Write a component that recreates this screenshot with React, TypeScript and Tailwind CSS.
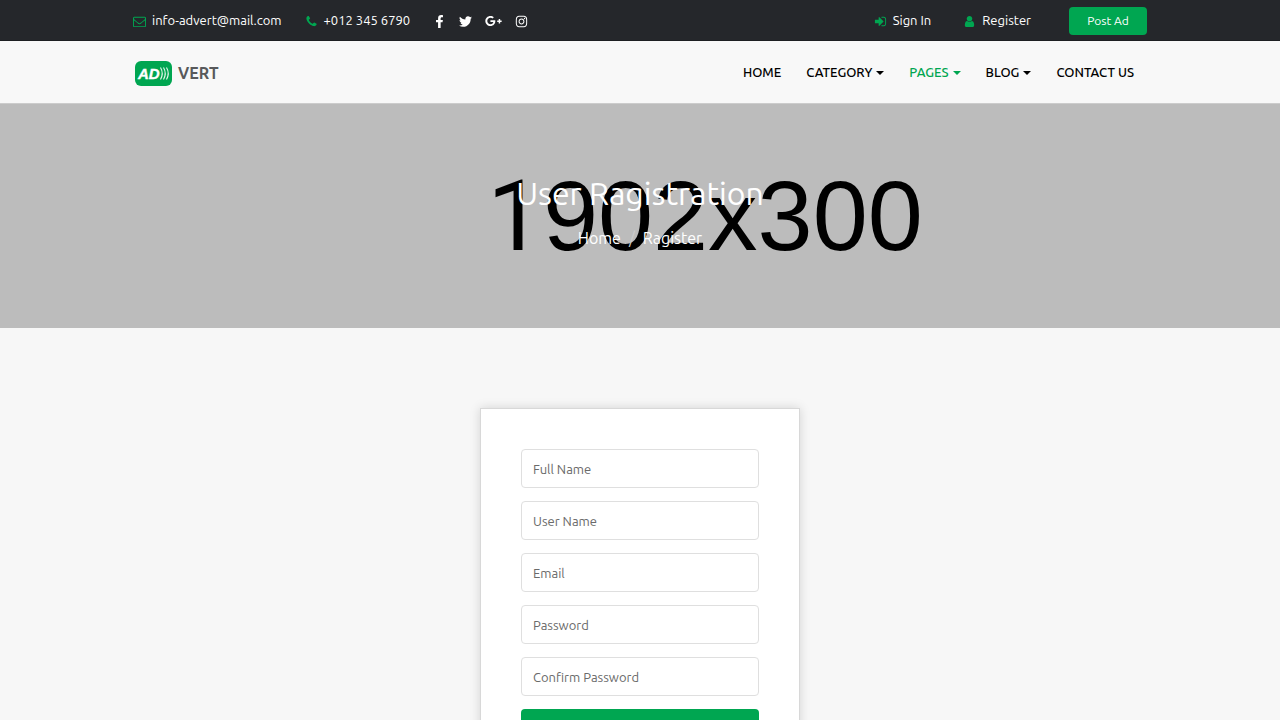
import type { ReactNode } from "react";
import { FaFacebookF, FaGooglePlusG, FaInstagram, FaTwitter } from "react-icons/fa";

const icons = {
	envelope:
		"M1664 1504v-768q-32 36-69 66-268 206-426 338-51 43-83 67t-86.5 48.5-102.5 24.5h-2q-48 0-102.5-24.5t-86.5-48.5-83-67q-158-132-426-338-37-30-69-66v768q0 13 9.5 22.5t22.5 9.5h1472q13 0 22.5-9.5t9.5-22.5zm0-1051v-24.5l-.5-13-3-12.5-5.5-9-9-7.5-14-2.5h-1472q-13 0-22.5 9.5t-9.5 22.5q0 168 147 284 193 152 401 317 6 5 35 29.5t46 37.5 44.5 31.5 50.5 27.5 43 9h2q20 0 43-9t50.5-27.5 44.5-31.5 46-37.5 35-29.5q208-165 401-317 54-43 100.5-115.5t46.5-131.5zm128-37v1088q0 66-47 113t-113 47h-1472q-66 0-113-47t-47-113v-1088q0-66 47-113t113-47h1472q66 0 113 47t47 113z",
	phone:
		"M1600 1240q0 27-10 70.5t-21 68.5q-21 50-122 106-94 51-186 51-27 0-53-3.5t-57.5-12.5-47-14.5-55.5-20.5-49-18q-98-35-175-83-127-79-264-216t-216-264q-48-77-83-175-3-9-18-49t-20.5-55.5-14.5-47-12.5-57.5-3.5-53q0-92 51-186 56-101 106-122 25-11 68.5-21t70.5-10q14 0 21 3 18 6 53 76 11 19 30 54t35 63.5 31 53.5q3 4 17.5 25t21.5 35.5 7 28.5q0 20-28.5 50t-62 55-62 53-28.5 46q0 9 5 22.5t8.5 20.5 14 24 11.5 19q76 137 174 235t235 174q2 1 19 11.5t24 14 20.5 8.5 22.5 5q18 0 46-28.5t53-62 55-62 50-28.5q14 0 28.5 7t35.5 21.5 25 17.5q25 15 53.5 31t63.5 35 54 30q70 35 76 53 3 7 3 21z",
	signIn:
		"M1312 896q0 26-19 45l-544 544q-19 19-45 19t-45-19-19-45v-288h-448q-26 0-45-19t-19-45v-384q0-26 19-45t45-19h448v-288q0-26 19-45t45-19 45 19l544 544q19 19 19 45zm352-352v704q0 119-84.5 203.5t-203.5 84.5h-320q-13 0-22.5-9.5t-9.5-22.5q0-4-1-20t-.5-26.5 3-23.5 10-19.5 20.5-6.5h320q66 0 113-47t47-113v-704q0-66-47-113t-113-47h-312l-11.5-1-11.5-3-8-5.5-7-9-2-13.5q0-4-1-20t-.5-26.5 3-23.5 10-19.5 20.5-6.5h320q119 0 203.5 84.5t84.5 203.5z",
	user: "M1536 1399q0 109-62.5 187t-150.5 78h-854q-88 0-150.5-78t-62.5-187q0-85 8.5-160.5t31.5-152 58.5-131 94-89 134.5-34.5q131 128 313 128t313-128q76 0 134.5 34.5t94 89 58.5 131 31.5 152 8.5 160.5zm-256-887q0 159-112.5 271.5t-271.5 112.5-271.5-112.5-112.5-271.5 112.5-271.5 271.5-112.5 271.5 112.5 112.5 271.5z"
};

const menu = [
	{ label: "HOME" },
	{ label: "CATEGORY", dropdown: true },
	{ label: "PAGES", dropdown: true, active: true },
	{ label: "BLOG", dropdown: true },
	{ label: "CONTACT US" }
];

const fields = [
	{ id: "full-name", label: "Full Name", type: "text" },
	{ id: "user-name", label: "User Name", type: "text" },
	{ id: "email", label: "Email", type: "email" },
	{ id: "password", label: "Password", type: "password" },
	{ id: "confirm-password", label: "Confirm Password", type: "password" }
];

function Icon({ name }: { name: keyof typeof icons }) {
	return (
		<svg viewBox="0 0 1792 1792" className="h-[13px] w-[13px] shrink-0 fill-[#00a651]" aria-hidden="true">
			<path d={icons[name]} />
		</svg>
	);
}

function Container({ className, children }: { className: string; children: ReactNode }) {
	return <div className={`mx-auto flex w-full max-w-[1014px] items-center ${className}`}>{children}</div>;
}

function TopBar() {
	return (
		<div className="border-b border-[#1d1f22] bg-[#25272b] text-[13px] text-white">
			<Container className="h-10 justify-between pt-[2px]">
				<div className="flex items-center gap-[23px]">
					<a href="#" className="flex items-center gap-[6px]">
						<Icon name="envelope" />
						info-advert@mail.com
					</a>
					<a href="#" className="flex items-center gap-[6px]">
						<Icon name="phone" />
						+012 345 6790
					</a>
					<div className="flex items-center gap-[13px]">
						<a href="#" aria-label="Facebook">
							<FaFacebookF />
						</a>
						<a href="#" aria-label="Twitter">
							<FaTwitter />
						</a>
						<a href="#" aria-label="Google Plus">
							<FaGooglePlusG className="h-4 w-[17px]" />
						</a>
						<a href="#" aria-label="Instagram">
							<FaInstagram />
						</a>
					</div>
				</div>
				<div className="flex items-center">
					<a href="#" className="mr-8 flex items-center gap-[6px]">
						<Icon name="signIn" />
						Sign In
					</a>
					<a href="#" className="mr-[38px] flex items-center gap-[6px]">
						<Icon name="user" />
						Register
					</a>
					<button className="h-7 w-[78px] cursor-pointer rounded bg-[#00a651] text-xs">Post Ad</button>
				</div>
			</Container>
		</div>
	);
}

function Logo() {
	return (
		<a href="#" className="ml-[2px] flex items-center gap-[6px]">
			<svg viewBox="0 0 37 25" className="h-[25px] w-[37px]" aria-hidden="true">
				<rect width="37" height="25" rx="6" fill="#00a651" />
				<text
					x="3"
					y="18"
					fill="#fff"
					stroke="#fff"
					strokeWidth="0.4"
					fontFamily="Liberation Sans, sans-serif"
					fontSize="15"
					fontWeight="700"
					fontStyle="italic"
				>
					AD
				</text>
				<path
					d="M25.5 6.5q3.5 6 0 12M28.5 6.5q3.5 6 0 12M31.5 6.5q3.5 6 0 12"
					fill="none"
					stroke="#e6f6ed"
					strokeWidth="1.1"
				/>
			</svg>
			<span className="text-base font-bold text-[#58595b]">VERT</span>
		</a>
	);
}

function Header() {
	return (
		<header className="border-b border-[#cccccc] bg-[#f8f8f8]">
			<Container className="h-[62px] justify-between pt-[2px]">
				<Logo />
				<nav className="mr-[13px] flex gap-[25px] text-[13px] font-medium">
					{menu.map((item) => (
						<a
							href="#"
							key={item.label}
							className={`flex items-center gap-1 ${item.active ? "text-[#00a651]" : "text-black"}`}
						>
							{item.label}
							{item.dropdown && (
								<span className="border-x-[4px] border-t-[4px] border-x-transparent border-t-current"></span>
							)}
						</a>
					))}
				</nav>
			</Container>
		</header>
	);
}

function Banner() {
	return (
		<section className="relative overflow-hidden bg-[#bcbcbc] px-4 pt-[67px] pb-[78px] text-center text-white">
			<div className="absolute inset-0 flex items-center justify-center pb-px pl-[130px] font-['Liberation_Sans',sans-serif] text-[99px] leading-none text-black">
				<span>
					<span className="font-[Roboto,sans-serif]">1</span>902x300
				</span>
			</div>
			<div className="relative">
				<h1 className="text-[32px] leading-11">User Ragistration</h1>
				<div className="mt-[11px] flex justify-center gap-2 text-base leading-6">
					<a href="#">Home</a>
					<span className="text-[#cccccc]">/</span>
					<span>Ragister</span>
				</div>
			</div>
		</section>
	);
}

function RegisterForm() {
	return (
		<form className="mx-auto flex w-full max-w-80 flex-col gap-[13px] border border-[#d8d8d8] bg-white p-10 shadow-[0_0_10px_rgba(0,0,0,0.15)]">
			{fields.map((field) => (
				<input
					key={field.id}
					id={field.id}
					type={field.type}
					placeholder={field.label}
					aria-label={field.label}
					className="h-[39px] w-full rounded border border-[#dfdfdf] px-[11px] text-[13px] text-[#333333] outline-none placeholder:text-[#6a6a6a]"
				/>
			))}
			<button type="submit" className="h-10 cursor-pointer rounded bg-[#00a651] text-[13px] text-white">
				Register
			</button>
		</form>
	);
}

export default function App() {
	return (
		<div className="min-h-screen bg-[#f7f7f7] font-[Ubuntu,'Noto_Sans',sans-serif]">
			<TopBar />
			<Header />
			<Banner />
			<main className="px-4 py-20">
				<RegisterForm />
			</main>
		</div>
	);
}
